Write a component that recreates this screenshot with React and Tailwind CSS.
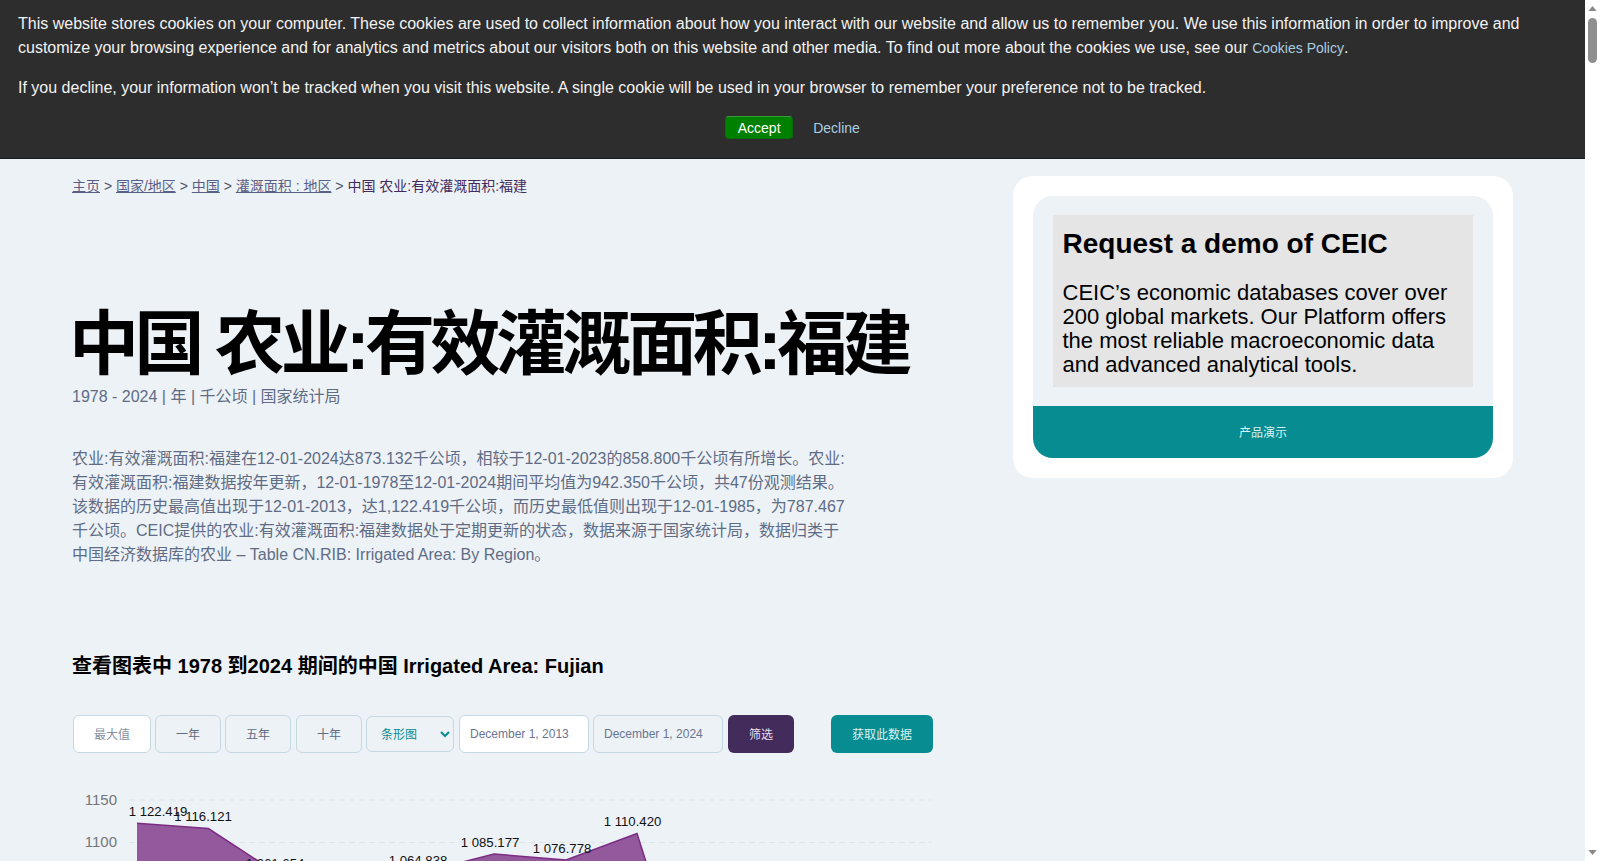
import React from 'react'

const font = "font-['Liberation_Sans','Noto_Sans_CJK_SC',sans-serif]"

const Crumbs = () => (
  <div className='text-sm leading-5 text-[#4a5568]'>
    <a className='underline text-[#5a5f85]'>主页</a> &gt; <a className='underline text-[#5a5f85]'>国家/地区</a> &gt; <a className='underline text-[#5a5f85]'>中国</a> &gt; <a className='underline text-[#5a5f85]'>灌溉面积 : 地区</a> &gt; <span className='text-[#432c5b]'>中国 农业:有效灌溉面积:福建</span>
  </div>
)

const rangeBtn = 'h-[38px] pt-0.5 rounded-md border border-[#c5d9e3] text-xs text-[#5f6c85]'

const Controls = () => (
  <div className='flex items-center gap-1 mt-[35px] ml-px'>
    <button className={rangeBtn + ' w-[78px] bg-white text-[#8690a5]'}>最大值</button>
    <button className={rangeBtn + ' w-[66px]'}>一年</button>
    <button className={rangeBtn + ' w-[66px]'}>五年</button>
    <button className={rangeBtn + ' w-[66px] ml-px'}>十年</button>
    <select className='h-9 w-[88px] rounded-md border border-[#c5d9e3] text-xs text-[#078c91] pl-2.5 pt-px'>
      <option>条形图</option>
    </select>
    <input readOnly value='December 1, 2013' className='h-[38px] w-[130px] ml-px rounded-md border border-[#c5d9e3] bg-white px-2.5 text-xs text-[#6b7590]' />
    <input readOnly value='December 1, 2024' className='h-[38px] w-[130px] rounded-md border border-[#c5d9e3] px-2.5 text-xs text-[#6b7590]' />
    <button className='h-[38px] w-[66px] ml-px pt-0.5 rounded-md bg-[#432c5b] text-xs text-[#e6dff0]'>筛选</button>
    <button className='h-[38px] w-[102px] ml-[33px] pt-0.5 rounded-md bg-[#078c91] text-xs text-[#d8f2f2]'>获取此数据</button>
  </div>
)

const points = [
  [137, 823.3, '1 122.419', 158],
  [208.4, 828.6, '1 116.121', 203],
  [279.8, 875, '1 061.654', 275],
  [351.2, 890, '', 0],
  [422.6, 872.3, '1 064.838', 418],
  [494, 854, '1 085.177', 490],
  [566, 860, '1 076.778', 562],
  [637, 833.6, '1 110.420', 632.5],
  [708.2, 1057, '', 0],
]

const Chart = () => {
  const line = points.map((p) => p[0] + ',' + p[1]).join(' ')
  return (
    <svg viewBox='72 790 868 80' className='block mt-[37px] w-[868px] h-20'>
      <line x1='129' x2='931' y1='800' y2='800' stroke='#dfe4e8' strokeDasharray='6 4' />
      <line x1='129' x2='931' y1='842.5' y2='842.5' stroke='#dfe4e8' strokeDasharray='6 4' />
      <text x='117' y='805' textAnchor='end' fontSize='15' fill='#767676'>1150</text>
      <text x='117' y='847' textAnchor='end' fontSize='15' fill='#767676'>1100</text>
      <polygon points={'137,1057 ' + line} fill='#7b2d84' fillOpacity='0.78' />
      <polyline points={line} fill='none' stroke='#7b2d84' strokeWidth='1.5' />
      {points.filter((p) => p[2]).map((p) => (
        <text key={p[2]} x={p[3]} y={p[1] - 7.5} textAnchor='middle' fontSize='13.2' fill='#111'>{p[2]}</text>
      ))}
    </svg>
  )
}

const DemoCard = () => (
  <div className='w-[500px] h-[302px] rounded-[20px] bg-white p-5'>
    <div className='h-[262px] rounded-[20px] bg-[#edf2f7] overflow-hidden flex flex-col'>
      <div className='mx-5 mt-[19px] h-[172px] bg-[#e5e5e5] pl-[9.5px] pr-2 text-black'>
        <h2 className='text-[28px] font-bold leading-8 pt-[13px]'>Request a demo of CEIC</h2>
        <p className='text-[22px] leading-6 mt-[21px]'>CEIC’s economic databases cover over 200 global markets. Our Platform offers the most reliable macroeconomic data and advanced analytical tools.</p>
      </div>
      <button className='mt-auto h-[52px] pt-0.5 bg-[#078c91] text-xs text-[#d8f2f2]'>产品演示</button>
    </div>
  </div>
)

const Banner = () => (
  <div className='absolute top-0 left-0 right-0 h-[159px] bg-[#2d2d2d] border-b border-[#1c1c1c] px-[18px] pt-3 text-base leading-6 text-[#f2f2f2]'>
    <p>This website stores cookies on your computer. These cookies are used to collect information about how you interact with our website and allow us to remember you. We use this information in order to improve and customize your browsing experience and for analytics and metrics about our visitors both on this website and other media. To find out more about the cookies we use, see our <a className='text-sm text-[#a9cde0]'>Cookies Policy</a>.</p>
    <p className='mt-4'>If you decline, your information won’t be tracked when you visit this website. A single cookie will be used in your browser to remember your preference not to be tracked.</p>
    <div className='flex justify-center items-center gap-5 mt-4 text-sm'>
      <button className='w-[68px] h-[23px] rounded-sm bg-[#008000] border border-[#0a6b0a] border-t-[#3a9a3a] text-white'>Accept</button>
      <a className='text-[#a9cde0]'>Decline</a>
    </div>
  </div>
)

const Scrollbar = () => (
  <div className='w-[15px] shrink-0 bg-white flex flex-col items-center relative'>
    <svg viewBox='0 0 10 6' className='w-[9px] h-[5px] mt-[6px] fill-[#888]'><path d='M5 0l5 6H0z' /></svg>
    <div className='w-[9px] h-[45px] mt-[7px] rounded-full bg-[#8f8f8f]' />
    <svg viewBox='0 0 10 6' className='w-[9px] h-[5px] mt-auto mb-[6px] fill-[#888]'><path d='M5 6L0 0h10z' /></svg>
  </div>
)

export default function App() {
  return (
    <div className={'flex h-screen overflow-hidden bg-white ' + font}>
      <div className='relative flex-1 min-w-0 overflow-hidden bg-[#edf2f7]'>
        <div className='flex justify-between px-[72px] pt-[176px]'>
          <div className='w-[870px]'>
            <Crumbs />
            <h1 className='mt-[109px] -ml-[3px] text-[70px] tracking-[-4.45px] leading-20 font-bold text-black whitespace-nowrap'>中国 农业:有效灌溉面积:福建</h1>
            <div className='text-base leading-6 text-[#5f6c85]'>1978 - 2024 | 年 | 千公顷 | 国家统计局</div>
            <p className='mt-[38px] w-[775px] text-base leading-6 text-[#5f6c85]'>农业:有效灌溉面积:福建在12-01-2024达873.132千公顷，相较于12-01-2023的858.800千公顷有所增长。农业:有效灌溉面积:福建数据按年更新，12-01-1978至12-01-2024期间平均值为942.350千公顷，共47份观测结果。该数据的历史最高值出现于12-01-2013，达1,122.419千公顷，而历史最低值则出现于12-01-1985，为787.467千公顷。CEIC提供的农业:有效灌溉面积:福建数据处于定期更新的状态，数据来源于国家统计局，数据归类于中国经济数据库的农业 – Table CN.RIB: Irrigated Area: By Region。</p>
            <h2 className='mt-[85px] text-xl leading-7 font-bold text-black'>查看图表中 1978 到2024 期间的中国 Irrigated Area: Fujian</h2>
            <Controls />
            <Chart />
          </div>
          <DemoCard />
        </div>
        <Banner />
      </div>
      <Scrollbar />
    </div>
  )
}
